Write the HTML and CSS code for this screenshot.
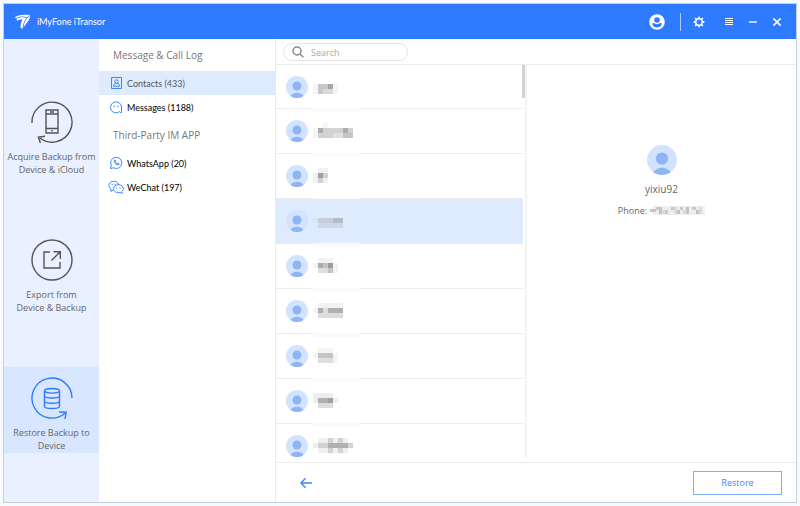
FILE: index.html
```
<!DOCTYPE html>
<html lang="en">
<head>
    <meta charset="UTF-8">
    <meta name="viewport" content="width=device-width, initial-scale=1.0">
    <title>iMyFone iTransor</title>
    <link rel="stylesheet" href="styles.css">
</head>
<body>
    <svg class="defs" aria-hidden="true">
        <symbol id="avatar" viewBox="0 0 22 22">
            <circle cx="11" cy="11" r="11" fill="#d2e3ff"/>
            <circle cx="11" cy="10" r="4.5" fill="#8fb4f4"/>
            <path d="M4.5 19.9a8.2 8.2 0 0 1 13 0a11 11 0 0 1-13 0z" fill="#8fb4f4"/>
        </symbol>
    </svg>

    <div class="window">
        <header class="titlebar">
            <svg class="logo" width="16" height="16" viewBox="0 0 16 16" fill="#fff">
                <path d="M0 3C4 .8 10 .2 15.200 1.200 14 1.800 13 2.500 12.200 3.300 8 1.800 4 2.200 .8 4.200z"/>
                <path d="M1.300 5C4.500 3 8.500 3 11.500 4.100 9.300 6.700 8 10 7.400 15L5.600 13.800C5.400 10.500 6 8 7.600 5.700 5.500 5.200 3.800 5.700 2.300 6.700z"/>
                <path d="M15.300 1.800C14.800 6 12 8.500 8.400 13.500 8.900 8.500 11 4.500 15.300 1.800z"/>
            </svg>
            <h1>iMyFone iTransor</h1>
            <button type="button" aria-label="Account">
                <svg width="16" height="16" viewBox="0 0 16 16">
                    <circle cx="8" cy="8" r="7.800" fill="#fff"/>
                    <circle cx="8" cy="6" r="2.800" fill="#2f7bff"/>
                    <path d="M3 9.200c1 .2 1.400.2 2.200-.3 1.600 1.700 4 1.700 5.600 0 .8.500 1.200.5 2.200.3-.6 2.700-2.600 4.300-5 4.300s-4.400-1.600-5-4.300z" fill="#2f7bff"/>
                </svg>
            </button>
            <span class="divider"></span>
            <button type="button" aria-label="Settings">
                <svg width="12" height="12" viewBox="0 0 12 12" fill="none" stroke="#fff">
                    <circle cx="6" cy="6" r="3.200" stroke-width="1.400"/>
                    <path d="M6 .7v2M6 9.300v2M.7 6h2M9.300 6h2M2.200 2.200l1.400 1.400M8.400 8.400l1.400 1.400M2.200 9.800l1.400-1.400M8.400 3.600l1.400-1.400" stroke-width="1.800"/>
                </svg>
            </button>
            <button type="button" aria-label="Menu">
                <svg width="8" height="7" viewBox="0 0 8 7" stroke="#fff"><path d="M0 .5h8M0 2.500h8M0 4.500h8M0 6.500h8"/></svg>
            </button>
            <button type="button" aria-label="Minimize">
                <svg width="8" height="8" viewBox="0 0 8 8" stroke="#fff"><path d="M0 4h8" stroke-width="1.400"/></svg>
            </button>
            <button type="button" aria-label="Close">
                <svg width="8" height="8" viewBox="0 0 8 8" stroke="#fff"><path d="M.4.4l7.200 7.200M7.600.4L.4 7.600" stroke-width="1.600"/></svg>
            </button>
        </header>

        <div class="body">
            <nav class="sidebar">
                <a href="#acquire">
                    <svg width="42" height="42" viewBox="0 0 42 42" fill="none" stroke="#555" stroke-width="1.400">
                        <path d="M1 22A20 20 0 1 1 8.500 36.800"/>
                        <path d="M14 35.200l-6.600.8 2 6"/>
                        <path d="M15 9h12v23H15zM15 13h12M15 27.500h12"/>
                        <path d="M19 11h4M20.300 29.800h1.500"/>
                    </svg>
                    <span>Acquire Backup from<br>Device &amp; iCloud</span>
                </a>
                <a href="#export">
                    <svg width="42" height="42" viewBox="0 0 42 42" fill="none" stroke="#555" stroke-width="1.400">
                        <circle cx="21" cy="21" r="20"/>
                        <path d="M19 13h-6v16h16v-6"/>
                        <path d="M20.500 21.500L29 13M22.500 12.700h6.800v7"/>
                    </svg>
                    <span>Export from<br>Device &amp; Backup</span>
                </a>
                <a href="#restore" class="active">
                    <svg width="42" height="42" viewBox="0 0 42 42" fill="none" stroke="#2f7bff" stroke-width="1.400">
                        <path d="M41 21A20 20 0 1 0 34 36.300"/>
                        <path d="M28 35l7.200.2-1.200 7"/>
                        <ellipse cx="21" cy="13.800" rx="7.500" ry="2.300"/>
                        <path d="M13.500 13.800v15.400c0 3 15 3 15 0V13.800M13.500 18.800c0 3 15 3 15 0M13.500 24c0 3 15 3 15 0"/>
                    </svg>
                    <span>Restore Backup to<br>Device</span>
                </a>
            </nav>

            <nav class="categories">
                <h2>Message &amp; Call Log</h2>
                <a href="#contacts" class="active">
                    <svg width="16" height="16" viewBox="0 0 16 16" fill="none" stroke="#3f86fb">
                        <path d="M3.500 2.500h10v11h-10z"/>
                        <circle cx="8.500" cy="6.500" r="1.700"/>
                        <path d="M5.500 11.300h6c0-3-1.600-2.600-3-2.600s-3-.4-3 2.600z"/>
                    </svg>
                    Contacts (433)
                </a>
                <a href="#messages">
                    <svg width="16" height="16" viewBox="0 0 16 16" fill="none" stroke="#3f86fb">
                        <path d="M11.500 12.600A5.500 5.500 0 1 1 13.500 8v5.500h-1.200z"/>
                        <path d="M5.800 7.500h1M9.500 7.500h1" stroke-width="1.500"/>
                    </svg>
                    Messages (1188)
                </a>
                <h2>Third-Party IM APP</h2>
                <a href="#whatsapp">
                    <svg width="16" height="16" viewBox="0 0 16 16" fill="none" stroke="#3f86fb">
                        <path d="M2.500 13.500l.8-3A5.600 5.600 0 1 1 5.600 12.800z"/>
                        <path d="M6.200 5.200c-.3 2.600 2 4.800 4.600 4.700l.2-1-1.400-.7-.8.600L7.400 7.400l.5-.8-.7-1.500z"/>
                    </svg>
                    WhatsApp (20)
                </a>
                <a href="#wechat">
                    <svg width="16" height="16" viewBox="0 0 16 16" fill="none" stroke="#3f86fb">
                        <path d="M5.500 11l-2.700 1.300.2-2.200C-.8 7.200 1 2.500 5.500 2.200c2.600 0 4.500 1.300 5 3.100"/>
                        <path d="M13.800 12.500l.5 1.800-2-.8C8.500 14.500 5.600 12.500 5.600 9.800c0-5.500 9.800-5.500 9.800 0 0 1-.6 2-1.600 2.700z"/>
                        <path d="M3.700 5.300h1M6.500 5.300h1M8 9.200h1M11.500 9.200h1" stroke-width="1.300"/>
                    </svg>
                    WeChat (197)
                </a>
            </nav>

            <main class="content">
                <div class="toolbar">
                    <label class="search">
                        <svg width="12" height="12" viewBox="0 0 12 12" fill="none" stroke="#888" stroke-width="1.500">
                            <circle cx="5" cy="5" r="4"/>
                            <path d="M8 8l3.400 3.200"/>
                        </svg>
                        <input type="search" placeholder="Search" aria-label="Search">
                    </label>
                </div>

                <div class="panes">
                    <div class="list">
                        <ul>
                            <li>
                                <svg class="avatar"><use href="#avatar"/></svg>
                                <svg class="mosaic"><path fill="#f5f5f5" d="M0 5h25v10H0z"/><path fill="#c7c7c7" d="M5 5h10v10H5z"/><path fill="#a6a6a6" d="M15 5h5v5h-5z"/><path fill="#dadada" d="M10 10h10v5H10z"/></svg>
                            </li>
                            <li>
                                <svg class="avatar"><use href="#avatar"/></svg>
                                <svg class="mosaic"><path fill="#f5f5f5" d="M0 5h40v10H0zM10 0h5v5h-5z"/><path fill="#adadad" d="M5 5h5v5H5zM30 5h5v5h-5z"/><path fill="#d2d2d2" d="M10 5h20v5H10zM35 5h5v5h-5zM5 10h15v5H5z"/><path fill="#e0e0e0" d="M20 10h10v5H20z"/><path fill="#c4c4c4" d="M30 10h10v5H30z"/></svg>
                            </li>
                            <li>
                                <svg class="avatar"><use href="#avatar"/></svg>
                                <svg class="mosaic"><path fill="#f1f1f1" d="M0 5h15v10H0zM5 0h10v5H5z"/><path fill="#a0a0a0" d="M5 5h5v5H5z"/><path fill="#d0d0d0" d="M10 5h5v5h-5zM5 10h5v5H5z"/></svg>
                            </li>
                            <li class="selected">
                                <svg class="avatar"><use href="#avatar"/></svg>
                                <svg class="mosaic"><path fill="#d8e5f8" d="M0 5h5v5H0z"/><path fill="#c4cedd" d="M5 5h15v5H5z"/><path fill="#b5bcc8" d="M20 5h10v5H20z"/><path fill="#ced8e8" d="M5 10h25v5H5z"/></svg>
                            </li>
                            <li>
                                <svg class="avatar"><use href="#avatar"/></svg>
                                <svg class="mosaic"><path fill="#f2f2f2" d="M5 0h15v5H5zM0 5h25v5H0zM5 10h20v5H5z"/><path fill="#acacac" d="M5 5h5v5H5z"/><path fill="#c4c4c4" d="M10 5h5v5h-5zM15 10h5v5h-5z"/><path fill="#9c9c9c" d="M15 5h5v5h-5z"/><path fill="#dedede" d="M5 10h10v5H5z"/></svg>
                            </li>
                            <li>
                                <svg class="avatar"><use href="#avatar"/></svg>
                                <svg class="mosaic"><path fill="#f2f2f2" d="M5 0h25v5H5zM0 5h5v5H0z"/><path fill="#b0b0b0" d="M5 5h5v5H5zM15 5h15v5H15z"/><path fill="#dcdcdc" d="M10 5h5v5h-5zM5 10h25v5H5z"/></svg>
                            </li>
                            <li>
                                <svg class="avatar"><use href="#avatar"/></svg>
                                <svg class="mosaic"><path fill="#f4f4f4" d="M5 0h15v5H5zM0 5h25v5H0zM20 10h5v5h-5z"/><path fill="#c4c4c4" d="M5 5h15v5H5z"/><path fill="#dedede" d="M5 10h15v5H5z"/></svg>
                            </li>
                            <li>
                                <svg class="avatar"><use href="#avatar"/></svg>
                                <svg class="mosaic"><path fill="#eee" d="M0 0h20v5H0zM0 5h25v5H0z"/><path fill="#b0b0b0" d="M5 5h10v5H5z"/><path fill="#a0a0a0" d="M15 5h5v5h-5z"/><path fill="#dcdcdc" d="M5 10h15v5H5z"/></svg>
                            </li>
                            <li>
                                <svg class="avatar"><use href="#avatar"/></svg>
                                <svg class="mosaic"><path fill="#f0f0f0" d="M5 0h30v5H5zM0 5h5v5H0zM5 10h30v5H5z"/><path fill="#d2d2d2" d="M5 5h10v5H5zM35 5h5v5h-5zM15 0h5v5h-5zM25 0h5v5h-5zM15 10h5v5h-5zM25 10h5v5h-5z"/><path fill="#b0b0b0" d="M15 5h20v5H15z"/></svg>
                            </li>
                        </ul>
                        <span class="thumb"></span>
                    </div>

                    <section class="detail">
                        <svg class="avatar-large"><use href="#avatar"/></svg>
                        <h3>yixiu92</h3>
                        <p>
                            Phone:
                            <svg width="56" height="10" viewBox="0 0 56 10" shape-rendering="crispEdges">
                                <path fill="#eee" d="M4 0h52v9H4z"/>
                                <path fill="#c4c4c4" d="M1 3h6v3H1zM10 1h3v7h-3zM22 1h3v3h-3zM28 4h3v4h-3zM37 1h3v7h-3zM47 4h3v4h-3z"/>
                                <path fill="#cfc8c4" d="M7 1h3v3H7zM16 4h3v4h-3zM31 1h3v3h-3zM43 1h4v3h-4z"/>
                                <path fill="#d6dbe4" d="M13 4h3v4h-3zM25 1h3v7h-3zM34 4h3v4h-3zM50 1h3v7h-3z"/>
                            </svg>
                        </p>
                    </section>
                </div>

                <footer class="actions">
                    <button type="button" class="back" aria-label="Back">
                        <svg width="12" height="12" viewBox="0 0 12 12" fill="none" stroke="#3f86fb" stroke-width="1.400">
                            <path d="M5.500 1.200L.9 6l4.600 4.800M1 6h11"/>
                        </svg>
                    </button>
                    <button type="button" class="restore">Restore</button>
                </footer>
            </main>
        </div>
    </div>
</body>
</html>
```
FILE: styles.css
```
* {
    box-sizing: border-box;
}

body {
    margin: 0;
    padding: 3px;
    height: 100vh;
    background: #f8fafc;
    color: #666;
    font: 9px/13px "Open Sans", "Noto Sans", sans-serif;
}

h1, h2, h3, p, ul {
    margin: 0;
    padding: 0;
    font-size: inherit;
    font-weight: normal;
}

a {
    color: inherit;
    text-decoration: none;
}

button {
    padding: 0;
    border: 0;
    background: none;
    font: inherit;
    cursor: pointer;
}

svg {
    flex: none;
}

.defs {
    position: absolute;
    width: 0;
    height: 0;
}

.window {
    display: flex;
    flex-direction: column;
    height: 100%;
    border: 1px solid #bfd0e2;
    background: #fff;
}

/* title bar */
.titlebar {
    display: flex;
    align-items: center;
    height: 35px;
    padding: 0 7px 0 11px;
    background: #2f7bff;
    color: #fff;
}

.titlebar h1 {
    flex: 1;
    margin-left: 6px;
}

.titlebar h1,
.categories a {
    font-family: Lato, "Open Sans", sans-serif;
}

.titlebar button {
    display: flex;
    align-items: center;
    justify-content: center;
    width: 24px;
    height: 24px;
}

.divider {
    width: 1px;
    height: 18px;
    margin: 0 6px 0 11px;
    background: #a9c9ff;
}

.divider + button {
    margin-right: 6px;
}

.body {
    display: flex;
    flex: 1;
    min-height: 0;
}

/* left column */
.sidebar {
    display: flex;
    flex-direction: column;
    gap: 52px;
    width: 95px;
    padding-top: 52px;
    background: #e9f0ff;
}

.sidebar a {
    display: flex;
    flex-direction: column;
    align-items: center;
    gap: 7px;
    height: 86px;
    padding-top: 10px;
    text-align: center;
    white-space: nowrap;
}

.sidebar .active {
    background: #d9e6ff;
}

/* data types */
.categories {
    width: 177px;
    border-right: 1px solid #eaeaea;
    color: #000;
}

.categories h2 {
    padding-left: 14px;
    color: #777;
    font-size: 10px;
    line-height: 32px;
}

.categories a {
    display: flex;
    align-items: center;
    gap: 3px;
    height: 24px;
    padding-left: 9px;
}

.categories .active {
    background: #deebff;
    color: #555;
}

.content {
    display: flex;
    flex: 1;
    flex-direction: column;
    min-width: 0;
}

.toolbar {
    padding: 4px 7px 3px;
    border-bottom: 1px solid #eaeaea;
}

.search {
    display: flex;
    align-items: center;
    gap: 7px;
    width: 125px;
    height: 18px;
    padding: 0 8px;
    border: 1px solid #e6e6e6;
    border-radius: 9px;
}

.search input {
    width: 100%;
    padding: 0;
    border: 0;
    outline: 0;
    background: none;
    font: inherit;
}

.search input::placeholder {
    color: #aaa;
}

.panes {
    display: flex;
    flex: 1;
    min-height: 0;
    padding-bottom: 4px;
}

/* contact list */
.list {
    position: relative;
    width: 251px;
    border-right: 2px solid #f3f3f3;
    overflow: hidden;
}

.list ul {
    margin-right: 2px;
    list-style: none;
}

.list li {
    position: relative;
    display: flex;
    align-items: center;
    gap: 5px;
    height: 45px;
    padding-left: 10px;
    border-bottom: 1px solid #ebebeb;
}

.list li:first-child {
    height: 44px;
}

.list li:not(:last-child)::after {
    content: "";
    position: absolute;
    left: 37px;
    bottom: -4px;
    z-index: 1;
    width: 47px;
    height: 4px;
    background: #fafafa;
}

.list .selected {
    z-index: 2;
    background: #deebff;
}

.avatar {
    width: 22px;
    height: 22px;
}

.mosaic {
    width: 47px;
    height: 16px;
    shape-rendering: crispEdges;
}

.thumb {
    position: absolute;
    top: 0;
    right: 0;
    width: 3px;
    height: 33px;
    background: #d2d2d2;
}

/* selected contact */
.detail {
    flex: 1;
    padding-top: 80px;
    text-align: center;
}

.detail h3 {
    font-size: 10px;
}

.avatar-large {
    display: block;
    width: 30px;
    height: 30px;
    margin: 0 auto 8px;
}

.detail p {
    display: flex;
    align-items: center;
    justify-content: center;
    gap: 2px;
    margin-top: 8px;
}

.actions {
    display: flex;
    align-items: center;
    justify-content: space-between;
    height: 40px;
    padding: 0 14px 0 24px;
    border-top: 1px solid #eaeaea;
}

.back {
    display: flex;
}

.restore {
    width: 89px;
    height: 24px;
    border: 1px solid #7fadfb;
    color: #3f86fb;
}
```
